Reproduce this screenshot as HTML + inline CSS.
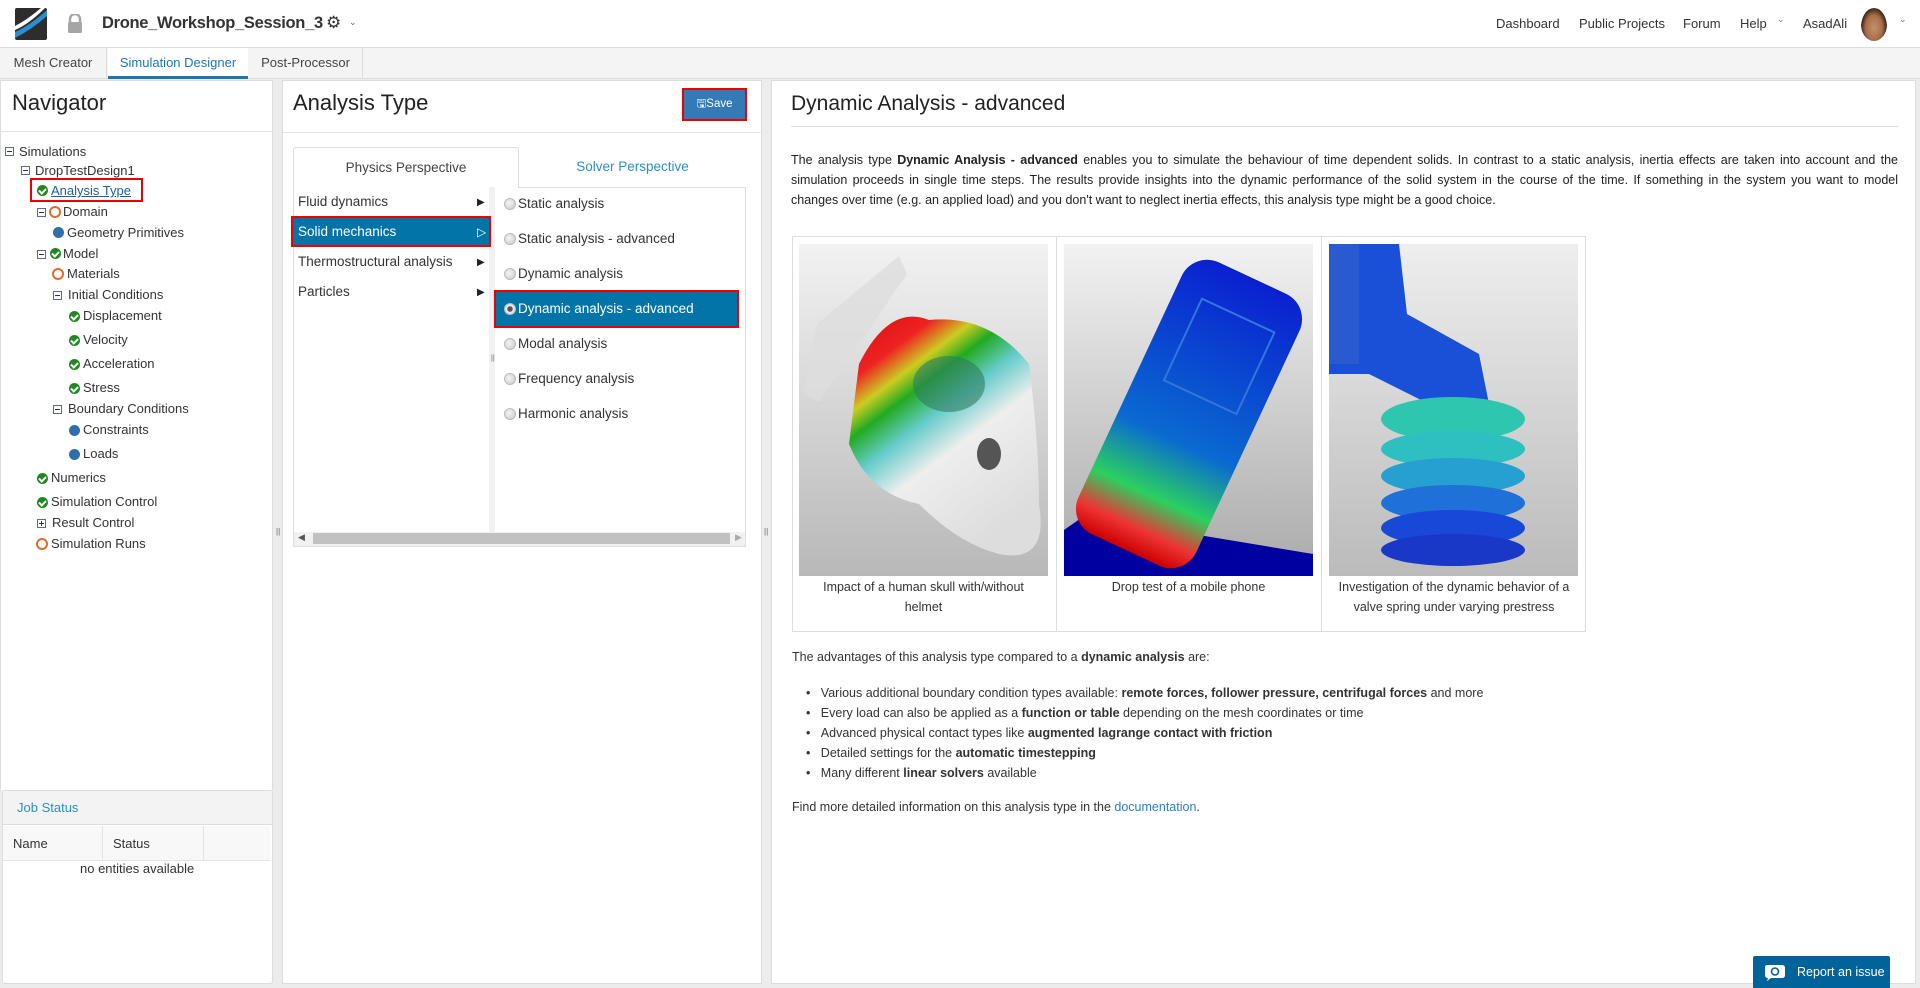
<!DOCTYPE html>
<html><head><meta charset="utf-8"><style>
*{box-sizing:border-box;margin:0;padding:0}
body{width:1920px;height:988px;overflow:hidden;background:#ececec;font-family:"Liberation Sans",sans-serif;color:#333;position:relative;font-size:13px}
.a{position:absolute}
.hdr{left:0;top:0;width:1920px;height:48px;background:#fff;border-bottom:1px solid #ddd}
.nav{top:16px;font-size:13px;color:#333}
.tabs{left:0;top:48px;width:1920px;height:31px;background:#f4f4f4;border-bottom:1px solid #ddd}
.tab{top:0;height:31px;line-height:30px;font-size:13px;color:#444;text-align:center}
.panel{background:#fff;border:1px solid #ddd}
.t{font-size:13px;white-space:nowrap;line-height:16px}
.ck{display:inline-block;width:11px;height:11px;border-radius:50%;background:#1e8a1e;position:absolute}
.ck:after{content:"";position:absolute;left:3px;top:2px;width:3px;height:5px;border:solid #fff;border-width:0 2px 2px 0;transform:rotate(45deg)}
.ring{width:12px;height:12px;border-radius:50%;border:2px solid #e8682a;position:absolute}
.dot{width:11px;height:11px;border-radius:50%;background:#2f6faa;position:absolute}
.mn{width:9px;height:9px;border:1px solid #5a63b5;position:absolute;background:#fff}
.mn:after{content:"";position:absolute;left:1px;top:3px;width:5px;height:1px;background:#333}
.pl:before{content:"";position:absolute;left:3px;top:1px;width:1px;height:5px;background:#333}
.li{font-size:13.5px;left:298px;white-space:nowrap}
.arr{font-size:10px;left:477px;color:#222}
.rad{width:12px;height:12px;border-radius:50%;background:radial-gradient(circle at 40% 40%,#f4f4f4,#c8c8c8);border:1px solid #bbb;position:absolute;left:504px}
.ri{left:518px;font-size:13.5px;white-space:nowrap}
p.j{text-align:justify;text-align-last:justify;white-space:nowrap}
.cap{font-size:12.5px;text-align:center;line-height:20px;color:#333}
.bul{left:806px;font-size:13px}
</style></head><body>

<div class="a hdr"></div>
<svg class="a" style="left:15px;top:8px" width="32" height="32" viewBox="0 0 32 32">
<rect width="32" height="32" rx="2" fill="#2d2d2d"/>
<path d="M0 24 Q14 18 32 2 L32 8 Q16 22 0 30Z" fill="#2a8fd0"/>
<path d="M0 18 Q12 12 26 0 L30 0 Q14 16 0 22Z" fill="#fff"/>
</svg>
<svg class="a" style="left:67px;top:14px" width="16" height="19" viewBox="0 0 16 19"><path d="M3 8V5a5 5 0 0 1 10 0v3" fill="none" stroke="#a5a5a5" stroke-width="2.4"/><rect x="1" y="8" width="14" height="11" rx="1.5" fill="#a5a5a5"/></svg>
<div class="a" style="left:102px;top:14px;font-size:16.5px;font-weight:bold;color:#333;letter-spacing:-0.3px">Drone_Workshop_Session_3</div>
<div class="a" style="left:326px;top:13px;font-size:17px;color:#333">⚙</div>
<div class="a" style="left:349px;top:17px;font-size:9px;color:#666">⌄</div>

<div class="a nav" style="left:1496px">Dashboard</div>
<div class="a nav" style="left:1579px">Public Projects</div>
<div class="a nav" style="left:1683px">Forum</div>
<div class="a nav" style="left:1740px">Help</div>
<div class="a nav" style="left:1777px;top:14px;font-size:9px;color:#777">⌄</div>
<div class="a nav" style="left:1803px">AsadAli</div>
<div class="a" style="left:1861px;top:8px;width:26px;height:33px;border-radius:50%;background:radial-gradient(ellipse at 50% 60%,#c98f6a 0,#a86e4a 45%,#3a2418 70%,#fff 72%)"></div>
<div class="a nav" style="left:1899px;top:14px;font-size:9px;color:#777">⌄</div>

<div class="a tabs"></div>
<div class="a tab" style="left:0;top:48px;width:107px;border-right:1px solid #ddd">Mesh Creator</div>
<div class="a tab" style="left:108px;top:48px;width:140px;background:#fff;color:#1a78b0;border-bottom:3px solid #1a78b0">Simulation Designer</div>
<div class="a tab" style="left:249px;top:48px;width:114px;border-right:1px solid #ddd">Post-Processor</div>

<!-- left panel -->
<div class="a panel" style="left:0;top:80px;width:273px;height:710px;border-bottom:none"></div>
<div class="a" style="left:12px;top:90px;font-size:22px;color:#222">Navigator</div>
<div class="a" style="left:0;top:131px;width:273px;height:1px;background:#e3e3e3"></div>

<div class="a mn" style="left:5px;top:147px"></div><div class="a t" style="left:19px;top:144px">Simulations</div>
<div class="a mn" style="left:21px;top:166px"></div><div class="a t" style="left:35px;top:163px">DropTestDesign1</div>
<div class="a" style="left:30px;top:178px;width:113px;height:24px;border:2px solid #e00"></div>
<div class="ck" style="left:37px;top:185px"></div><div class="a t" style="left:51px;top:183px;color:#1a5fa0;text-decoration:underline">Analysis Type</div>
<div class="a mn" style="left:37px;top:208px"></div><div class="ring" style="left:49px;top:206px"></div><div class="a t" style="left:63px;top:204px">Domain</div>
<div class="dot" style="left:53px;top:227px"></div><div class="a t" style="left:67px;top:225px">Geometry Primitives</div>
<div class="a mn" style="left:37px;top:250px"></div><div class="ck" style="left:50px;top:248px"></div><div class="a t" style="left:63px;top:246px">Model</div>
<div class="ring" style="left:52px;top:268px"></div><div class="a t" style="left:67px;top:266px">Materials</div>
<div class="a mn" style="left:53px;top:291px"></div><div class="a t" style="left:68px;top:287px">Initial Conditions</div>
<div class="ck" style="left:69px;top:311px"></div><div class="a t" style="left:83px;top:308px">Displacement</div>
<div class="ck" style="left:69px;top:335px"></div><div class="a t" style="left:83px;top:332px">Velocity</div>
<div class="ck" style="left:69px;top:359px"></div><div class="a t" style="left:83px;top:356px">Acceleration</div>
<div class="ck" style="left:69px;top:383px"></div><div class="a t" style="left:83px;top:380px">Stress</div>
<div class="a mn" style="left:53px;top:405px"></div><div class="a t" style="left:68px;top:401px">Boundary Conditions</div>
<div class="dot" style="left:69px;top:425px"></div><div class="a t" style="left:83px;top:422px">Constraints</div>
<div class="dot" style="left:69px;top:449px"></div><div class="a t" style="left:83px;top:446px">Loads</div>
<div class="ck" style="left:37px;top:473px"></div><div class="a t" style="left:51px;top:470px">Numerics</div>
<div class="ck" style="left:37px;top:497px"></div><div class="a t" style="left:51px;top:494px">Simulation Control</div>
<div class="a mn pl" style="left:37px;top:519px"></div><div class="a t" style="left:52px;top:515px">Result Control</div>
<div class="ring" style="left:36px;top:538px"></div><div class="a t" style="left:51px;top:536px">Simulation Runs</div>
<div class="a" style="left:276px;top:527px;font-size:8px;color:#666">||</div>

<!-- job status -->
<div class="a panel" style="left:2px;top:790px;width:271px;height:194px;border-radius:3px"></div>
<div class="a" style="left:3px;top:791px;width:269px;height:34px;background:#f3f3f3;border-bottom:1px solid #ddd"></div>
<div class="a t" style="left:17px;top:800px;color:#2a8fc5">Job Status</div>
<div class="a" style="left:3px;top:826px;width:267px;height:35px;background:#f8f8f8;border-bottom:1px solid #e3e3e3"></div>
<div class="a" style="left:102px;top:826px;width:1px;height:35px;background:#e3e3e3"></div>
<div class="a" style="left:203px;top:826px;width:1px;height:35px;background:#e3e3e3"></div>
<div class="a t" style="left:13px;top:836px">Name</div>
<div class="a t" style="left:113px;top:836px">Status</div>
<div class="a t" style="left:80px;top:861px">no entities available</div>

<!-- middle -->
<div class="a panel" style="left:282px;top:80px;width:480px;height:904px"></div>
<div class="a" style="left:293px;top:90px;font-size:22px;color:#222">Analysis Type</div>
<div class="a" style="left:682px;top:88px;width:65px;height:33px;border:2px solid #e00;background:#337ab7;color:#fff;font-size:11.5px;line-height:29px;text-align:center">🖫Save</div>
<div class="a" style="left:283px;top:132px;width:478px;height:1px;background:#e3e3e3"></div>
<div class="a" style="left:293px;top:147px;width:226px;height:41px;border:1px solid #ddd;border-bottom:none;border-radius:3px 3px 0 0;background:#fff;text-align:center;line-height:40px;font-size:13.5px;color:#444">Physics Perspective</div>
<div class="a" style="left:519px;top:147px;width:227px;height:40px;text-align:center;line-height:40px;font-size:13.5px;color:#2a8fc5">Solver Perspective</div>
<div class="a" style="left:293px;top:187px;width:453px;height:360px;border:1px solid #ddd;border-top:none"></div>
<div class="a" style="left:519px;top:187px;width:227px;height:1px;background:#ddd"></div>
<div class="a" style="left:489px;top:187px;width:6px;height:345px;background:#f1f1f1"></div>
<div class="a" style="left:491px;top:355px;font-size:7px;color:#666">||</div>

<div class="a li" style="top:194px">Fluid dynamics</div><div class="a arr" style="top:197px">▶</div>
<div class="a" style="left:291px;top:216px;width:200px;height:31px;border:2px solid #e00;background:#0374a8"></div>
<div class="a li" style="top:224px;color:#fff">Solid mechanics</div><div class="a arr" style="top:225px;color:#fff;font-size:12px">▷</div>
<div class="a li" style="top:254px">Thermostructural analysis</div><div class="a arr" style="top:257px">▶</div>
<div class="a li" style="top:284px">Particles</div><div class="a arr" style="top:287px">▶</div>

<div class="rad" style="top:198px"></div><div class="a ri" style="top:196px">Static analysis</div>
<div class="rad" style="top:233px"></div><div class="a ri" style="top:231px">Static analysis - advanced</div>
<div class="rad" style="top:268px"></div><div class="a ri" style="top:266px">Dynamic analysis</div>
<div class="a" style="left:494px;top:290px;width:245px;height:38px;border:2px solid #e00;background:#0374a8"></div>
<div class="rad" style="top:303px;background:radial-gradient(circle,#555 0,#555 2.5px,#eee 3px,#ccc)"></div><div class="a ri" style="top:301px;color:#fff">Dynamic analysis - advanced</div>
<div class="rad" style="top:338px"></div><div class="a ri" style="top:336px">Modal analysis</div>
<div class="rad" style="top:373px"></div><div class="a ri" style="top:371px">Frequency analysis</div>
<div class="rad" style="top:408px"></div><div class="a ri" style="top:406px">Harmonic analysis</div>

<div class="a" style="left:294px;top:532px;width:451px;height:14px;background:#f1f1f1"></div>
<div class="a" style="left:313px;top:533px;width:417px;height:11px;background:#c1c1c1"></div>
<div class="a" style="left:298px;top:532px;font-size:9px;color:#555">◀</div>
<div class="a" style="left:735px;top:532px;font-size:9px;color:#aaa">▶</div>
<div class="a" style="left:764px;top:527px;font-size:8px;color:#666">||</div>

<!-- right panel -->
<div class="a panel" style="left:771px;top:80px;width:1145px;height:904px"></div>
<div class="a" style="left:791px;top:92px;font-size:21px;color:#222">Dynamic Analysis - advanced</div>
<div class="a" style="left:791px;top:126px;width:1107px;height:1px;background:#ddd"></div>
<div class="a" style="left:791px;top:150px;width:1107px;font-size:12.5px;line-height:20px;color:#222">
<p class="j">The analysis type <b>Dynamic Analysis - advanced</b> enables you to simulate the behaviour of time dependent solids. In contrast to a static analysis, inertia effects are taken into account and the</p>
<p class="j">simulation proceeds in single time steps. The results provide insights into the dynamic performance of the solid system in the course of the time. If something in the system you want to model</p>
<p>changes over time (e.g. an applied load) and you don't want to neglect inertia effects, this analysis type might be a good choice.</p>
</div>

<div class="a" style="left:792px;top:236px;width:794px;height:396px;border:1px solid #ddd"></div>
<div class="a" style="left:1056px;top:236px;width:1px;height:396px;background:#ddd"></div>
<div class="a" style="left:1321px;top:236px;width:1px;height:396px;background:#ddd"></div>

<svg class="a" style="left:799px;top:244px" width="249" height="332" viewBox="0 0 249 332">
<defs><linearGradient id="bg" x1="0" y1="0" x2="0" y2="1"><stop offset="0" stop-color="#f2f2f2"/><stop offset="1" stop-color="#b8b8b8"/></linearGradient>
<linearGradient id="sk" x1="0" y1="0" x2="0.6" y2="1"><stop offset="0.05" stop-color="#d11"/><stop offset="0.2" stop-color="#e22"/><stop offset="0.3" stop-color="#cc2"/><stop offset="0.38" stop-color="#2a2"/><stop offset="0.5" stop-color="#6cc"/><stop offset="0.65" stop-color="#eee"/><stop offset="1" stop-color="#ddd"/></linearGradient></defs>
<rect width="249" height="332" fill="url(#bg)"/>
<path d="M100 12 L108 30 L20 158 L4 148 L18 80Z" fill="#ddd" opacity="0.8"/>
<path d="M60 120 Q90 60 130 76 Q190 70 230 120 Q240 200 240 260 Q250 320 200 310 Q160 300 120 260 Q70 250 50 200Z" fill="url(#sk)"/>
<ellipse cx="150" cy="140" rx="36" ry="28" fill="#2d7d5d" opacity="0.6"/>
<ellipse cx="190" cy="210" rx="12" ry="16" fill="#555"/>
</svg>
<svg class="a" style="left:1064px;top:244px" width="249" height="332" viewBox="0 0 249 332">
<defs><linearGradient id="bg2" x1="0" y1="0" x2="0" y2="1"><stop offset="0" stop-color="#f2f2f2"/><stop offset="1" stop-color="#aaa"/></linearGradient>
<linearGradient id="ph" x1="0" y1="0" x2="0" y2="1"><stop offset="0" stop-color="#0a20d0"/><stop offset="0.6" stop-color="#0a6ad0"/><stop offset="0.8" stop-color="#2bd060"/><stop offset="0.92" stop-color="#e33"/><stop offset="1" stop-color="#c00"/></linearGradient></defs>
<rect width="249" height="332" fill="url(#bg2)"/>
<path d="M0 286 L20 272 L249 310 L249 332 L0 332Z" fill="#0000a0"/>
<rect x="60" y="20" width="130" height="300" rx="28" fill="url(#ph)" transform="rotate(25 125 170)"/>
<rect x="88" y="60" width="80" height="90" fill="none" stroke="#37d" stroke-width="2" transform="rotate(25 125 170)"/>
</svg>
<svg class="a" style="left:1329px;top:244px" width="249" height="332" viewBox="0 0 249 332">
<defs><linearGradient id="bg3" x1="0" y1="0" x2="0" y2="1"><stop offset="0" stop-color="#eee"/><stop offset="1" stop-color="#bbb"/></linearGradient></defs>
<rect width="249" height="332" fill="url(#bg3)"/>
<path d="M0 0 L70 0 L78 70 L150 110 L160 160 L120 170 L40 130 L0 130Z" fill="#1a50d8"/>
<rect x="0" y="0" width="30" height="120" fill="#2a5ad0"/>
<g>
<ellipse cx="124" cy="175" rx="72" ry="22" fill="#2fc6b0"/>
<ellipse cx="124" cy="205" rx="72" ry="18" fill="#2ec0c0"/>
<ellipse cx="124" cy="232" rx="72" ry="18" fill="#26a0d0"/>
<ellipse cx="124" cy="259" rx="72" ry="18" fill="#1f70d8"/>
<ellipse cx="124" cy="284" rx="72" ry="18" fill="#1848d8"/>
<ellipse cx="124" cy="306" rx="72" ry="16" fill="#1a38c8"/>
</g>
</svg>
<div class="a cap" style="left:799px;top:577px;width:249px">Impact of a human skull with/without<br>helmet</div>
<div class="a cap" style="left:1064px;top:577px;width:249px">Drop test of a mobile phone</div>
<div class="a cap" style="left:1322px;top:577px;width:264px">Investigation of the dynamic behavior of a<br>valve spring under varying prestress</div>

<div class="a t" style="left:792px;top:649px;font-size:12.5px">The advantages of this analysis type compared to a <b>dynamic analysis</b> are:</div>
<div class="a t bul" style="top:685px;font-size:12.5px">•&nbsp;&nbsp;&nbsp;Various additional boundary condition types available: <b>remote forces, follower pressure, centrifugal forces</b> and more</div>
<div class="a t bul" style="top:705px;font-size:12.5px">•&nbsp;&nbsp;&nbsp;Every load can also be applied as a <b>function or table</b> depending on the mesh coordinates or time</div>
<div class="a t bul" style="top:725px;font-size:12.5px">•&nbsp;&nbsp;&nbsp;Advanced physical contact types like <b>augmented lagrange contact with friction</b></div>
<div class="a t bul" style="top:745px;font-size:12.5px">•&nbsp;&nbsp;&nbsp;Detailed settings for the <b>automatic timestepping</b></div>
<div class="a t bul" style="top:765px;font-size:12.5px">•&nbsp;&nbsp;&nbsp;Many different <b>linear solvers</b> available</div>
<div class="a t" style="left:792px;top:799px;font-size:12.5px">Find more detailed information on this analysis type in the <span style="color:#2a7fc5">documentation</span>.</div>

<div class="a" style="left:1753px;top:956px;width:137px;height:32px;background:#00639a;border-radius:2px 2px 0 0;color:#fff;font-size:12.5px;line-height:32px;padding-left:44px">Report an issue</div>
<svg class="a" style="left:1763px;top:964px" width="24" height="17" viewBox="0 0 24 17"><path d="M2 3 Q2 1 5 1 H19 Q22 1 22 4 V11 Q22 14 19 14 H8 L4 17 L5 14 Q2 14 2 11Z" fill="#fff"/><circle cx="12" cy="7.5" r="3.5" fill="none" stroke="#00639a" stroke-width="1.6"/></svg>
</body></html>
